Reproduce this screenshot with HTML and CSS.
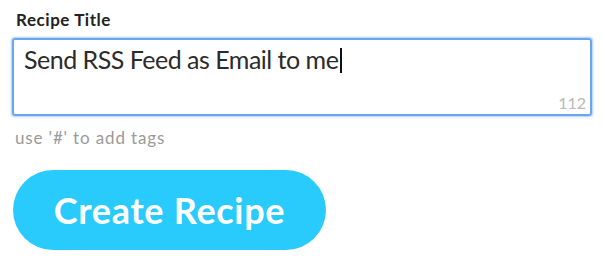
FILE: index.html
```html
<!DOCTYPE html>
<html>
<head>
<meta charset="utf-8">
<link rel="stylesheet" href="styles.css">
</head>
<body>
<div class="form">
  <label class="label">Recipe Title</label>
  <div class="field">
    <div class="input">Send RSS Feed as Email to me<span class="caret"></span></div>
    <span class="count">112</span>
  </div>
  <div class="hint">use '#' to add tags</div>
  <button class="btn">Create Recipe</button>
</div>
</body>
</html>
```
FILE: styles.css
```css
html, body {
  margin: 0;
  padding: 0;
  background: #ffffff;
}
body {
  font-family: Lato, "Open Sans", sans-serif;
}
.form {
  padding: 9px 10px 0 13px;
  display: flex;
  flex-direction: column;
  align-items: flex-start;
}
.label {
  font-size: 17px;
  font-weight: 700;
  letter-spacing: 0.55px;
  color: #222222;
  line-height: 22px;
  padding-left: 3px;
}
.field {
  position: relative;
  box-sizing: border-box;
  width: 580px;
  height: 78px;
  margin-top: 7px;
  margin-left: -1px;
  border: 2px solid #6aa7ee;
  border-radius: 3px;
  box-shadow: 0 0 2px 1px rgba(120, 170, 240, 0.6);
  padding: 4px 10px;
}
.input {
  font-size: 25px;
  letter-spacing: -0.5px;
  color: #2b2b2b;
  line-height: 30px;
}
.caret {
  display: inline-block;
  width: 1.5px;
  height: 25px;
  background: #111;
  vertical-align: -4px;
  margin-left: 2px;
}
.count {
  position: absolute;
  right: 4px;
  bottom: 3px;
  font-size: 16px;
  line-height: 16px;
  color: #b8b8b8;
}
.hint {
  margin-top: 12px;
  padding-left: 2px;
  font-size: 17px;
  letter-spacing: 0.85px;
  color: #9a9a9a;
  line-height: 20px;
}
.btn {
  margin-top: 22px;
  width: 313px;
  height: 80px;
  border: none;
  border-radius: 40px;
  background: #29cbfc;
  color: #ffffff;
  font-family: Lato, "Open Sans", sans-serif;
  font-weight: 700;
  font-size: 36px;
  letter-spacing: 0.7px;
  padding: 0;
}
```
